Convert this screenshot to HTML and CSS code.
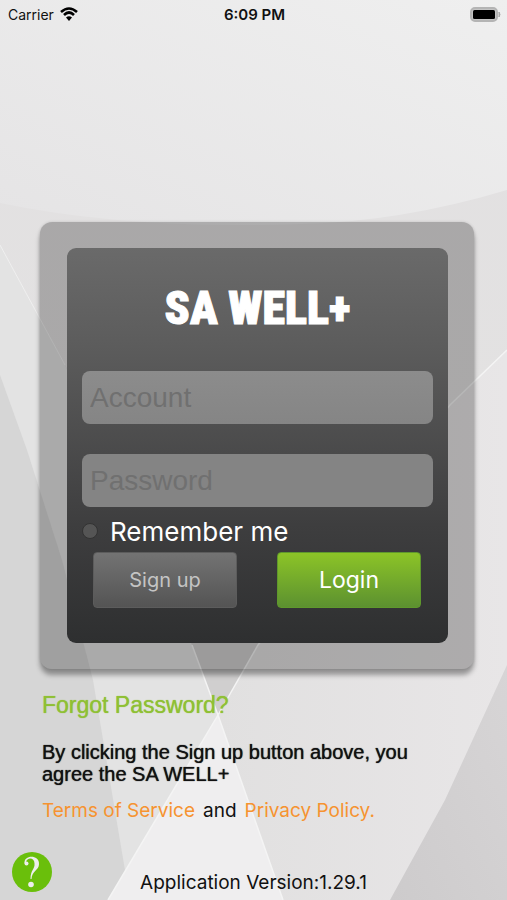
FILE: index.html
```
<!DOCTYPE html>
<html lang="en">
<head>
<meta charset="utf-8">
<meta name="viewport" content="width=device-width, initial-scale=1">
<title>SA WELL+</title>
<link rel="stylesheet" href="styles.css">
</head>
<body>
<div class="screen">
  <svg class="backdrop" viewBox="0 0 507 900" preserveAspectRatio="none" aria-hidden="true">
    <defs>
      <linearGradient id="sky" x1="0" y1="1" x2="1" y2="0"><stop offset="0" stop-color="#e5e4e5"/><stop offset="1" stop-color="#efefef"/></linearGradient>
      <linearGradient id="floor" x1="0" y1="0" x2="0" y2="1"><stop offset="0" stop-color="#e2e0e1"/><stop offset="0.5" stop-color="#e3e2e2"/><stop offset="1" stop-color="#e4e3e4"/></linearGradient>
      <linearGradient id="right" x1="0" y1="0" x2="1" y2="0"><stop offset="0" stop-color="#e1e0e0"/><stop offset="1" stop-color="#e8e6e7"/></linearGradient>
      <linearGradient id="corner" x1="0" y1="1" x2="1" y2="0"><stop offset="0" stop-color="#cdcbcc"/><stop offset="1" stop-color="#d7d5d6"/></linearGradient>
    </defs>
    <rect width="507" height="900" fill="url(#floor)"/>
    <path d="M0 0H507V190Q400 222 300 224Q130 230 0 203Z" fill="url(#sky)"/>
    <path d="M0 245L65 365L192 645L218 715L108 900H0Z" fill="#e3e3e3"/>
    <path d="M507 350L450 405L258 645L218 715L283 900H507Z" fill="url(#right)"/>
    <path d="M65 365L192 645L218 715L258 645L400 468L120 468Z" fill="#d0cfcf"/>
    <path d="M0 375L27 450L62 560L93 680L130 900H0Z" fill="#d6d6d6"/>
    <path d="M218 715L283 900H108Z" fill="#efeeef"/>
    <path d="M507 665L445 800L390 900H507Z" fill="url(#corner)"/>
    <path d="M0 245L65 365" fill="none" stroke="#efefef"/>
    <path d="M192 645L218 715L283 900M507 350L450 405L258 645L218 715L108 900" fill="none" stroke="#f4f4f4" stroke-width="1.500"/>
  </svg>

  <header class="status">
    <div class="carrier">
      <span>Carrier</span>
      <svg class="wifi" viewBox="0 0 18 14" role="img" aria-label="Wi-Fi">
        <path d="M1 5Q9 -2 17 5M4 8Q9 3 14 8" fill="none" stroke="#000" stroke-width="2.6"/>
        <path d="M6 10.600Q9 8 12 10.600L9 14Z"/>
      </svg>
    </div>
    <time class="clock">6:09 PM</time>
    <svg class="battery" viewBox="0 0 31 15" role="img" aria-label="Battery full">
      <rect x="1" y="1" width="26" height="13" rx="4" fill="#c4c4c4" stroke="#b4b4b4" stroke-width="2"/>
      <rect x="3" y="3" width="22" height="9" rx="1.500"/>
      <path d="M29 5Q31 7.500 29 10Z" fill="#aaa" stroke="#aaa"/>
    </svg>
  </header>

  <main>
    <div class="frame">
      <form class="panel">
        <h1>SA WELL+</h1>
        <input class="field" type="text" placeholder="Account" aria-label="Account">
        <input class="field" type="password" placeholder="Password" aria-label="Password">
        <label class="remember"><input type="checkbox"><span>Remember me</span></label>
        <div class="actions">
          <button class="signup" type="button">Sign up</button>
          <button class="login" type="submit">Login</button>
        </div>
      </form>
    </div>
    <div class="notes">
      <a class="forgot" href="#forgot">Forgot Password?</a>
      <p class="legal">By clicking the Sign up button above, you agree the SA WELL+</p>
      <p class="links"><a href="#terms">Terms of Service</a><span>and</span><a href="#privacy">Privacy Policy.</a></p>
    </div>
  </main>

  <footer class="footer">
    <button class="help" type="button" aria-label="Help">
      <svg viewBox="0 0 40 40" aria-hidden="true">
        <path d="M12.500 11.500C11.500 2.500 27.500 2.500 27 12C27 18.500 20 18.500 19.500 27H18.500C18.500 18 23 17 22.500 11.500C22.500 5 15 5 14 10Z" fill="#eee"/>
        <circle cx="14.500" cy="11.500" r="2" fill="#eee"/>
        <circle cx="19" cy="32.500" r="2.800" fill="#eee"/>
      </svg>
    </button>
    <span class="version">Application Version:1.29.1</span>
  </footer>
</div>
</body>
</html>
```
FILE: styles.css
```
* { box-sizing: border-box; }

body {
  margin: 0;
  color: #111;
  font-family: Inter, "Liberation Sans", sans-serif;
}

.screen {
  position: relative;
  isolation: isolate;
  display: flex;
  flex-direction: column;
  min-height: 100vh;
}

.backdrop {
  position: absolute;
  inset: 0;
  z-index: -1;
  width: 100%;
  height: 100%;
}

.status {
  display: grid;
  grid-template-columns: 1fr auto 1fr;
  align-items: center;
  height: 28px;
  padding: 0 6px 0 8px;
  font-size: 14px;
}

.carrier { display: flex; align-items: center; gap: 6px; }
.wifi { width: 18px; height: 14px; }
.clock { font-size: 15px; font-weight: 600; }
.battery { width: 31px; height: 15px; justify-self: end; }

.frame {
  margin: 194px 33px 0 40px;
  padding: 26px 26px 26px 27px;
  border-radius: 12px;
  background: rgba(0, 0, 0, 0.25);
  box-shadow: 0 6px 5px rgba(0, 0, 0, 0.35), 0 0 3px rgba(0, 0, 0, 0.15);
}

.panel {
  display: flex;
  flex-direction: column;
  padding: 32px 15px 35px;
  border-radius: 9px;
  background: linear-gradient(#6a6a6a, #5c5c5c 25%, #3e3e3f 70%, #2e2f30);
}

h1 {
  margin: 0 0 35px;
  color: #fff;
  font: 900 46px/56px "Roboto Condensed", "Liberation Sans", sans-serif;
  text-align: center;
  -webkit-text-stroke: 1px #fff;
}

.field {
  width: 100%;
  height: 53px;
  margin: 0 0 30px;
  padding: 0 8px;
  border: 0;
  border-radius: 8px;
  background: linear-gradient(#8c8c8c, #858585);
  color: #fff;
  font: 28px "Liberation Sans", sans-serif;
}

.field::placeholder { color: #707070; opacity: 1; }
.field[type="password"] { margin-bottom: 8px; background: #848484; }

.remember {
  display: flex;
  align-items: center;
  gap: 12px;
  height: 32px;
  color: #fff;
  font-size: 26px;
}

.remember input {
  appearance: none;
  width: 16px;
  height: 16px;
  margin: 0;
  border: 1px solid #333;
  border-radius: 50%;
  background: #555;
}

.actions {
  display: flex;
  gap: 40px;
  margin: 5px 12px 0 11px;
}

.actions button {
  flex: 1;
  height: 56px;
  padding: 0;
  border-radius: 4px;
  font-family: Inter, sans-serif;
}

.signup {
  border: 1px solid #5c5c5c;
  background: linear-gradient(#737373, #545454);
  color: #c4c4c4;
  font-size: 20px;
}

.login {
  border: 1px solid #5f982c;
  background: linear-gradient(#8cc427, #5c9130);
  color: #fff;
  font-size: 23px;
}

.notes { padding: 22px 42px 0; }

.forgot {
  display: block;
  color: #8fc034;
  font: 23px/28px "Liberation Sans", sans-serif;
  text-decoration: none;
  text-shadow: 0 0 1px #8fc034;
}

.legal {
  max-width: 400px;
  margin: 22px 0 14px;
  font: 20px/22px "Liberation Sans", sans-serif;
  text-shadow: 0 0 1px #111;
}

.links {
  display: flex;
  gap: 8px;
  margin: 0;
  font-size: 19px;
  line-height: 24px;
}

.links a { color: #f69330; text-decoration: none; }

.footer {
  display: grid;
  grid-template-columns: 1fr auto 1fr;
  align-items: end;
  margin-top: auto;
  padding: 0 12px 5px;
  font-size: 19px;
  line-height: 24px;
}

.help {
  width: 40px;
  height: 40px;
  margin-bottom: 3px;
  padding: 0;
  border: 0;
  border-radius: 50%;
  background: #6abf0b;
}

.help svg { display: block; width: 40px; height: 40px; }
```
